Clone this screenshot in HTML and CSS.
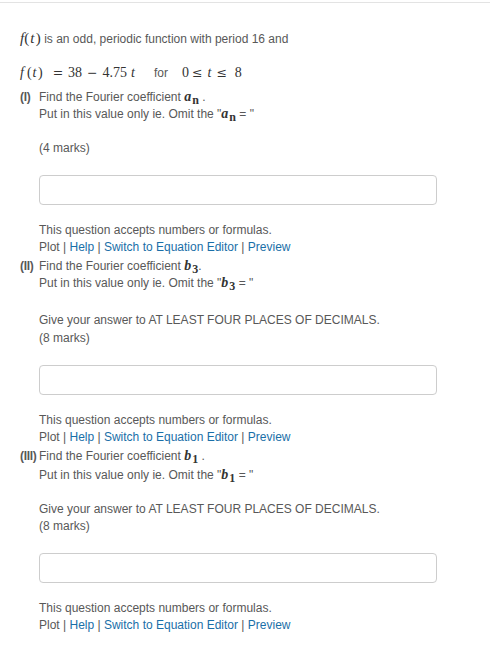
FILE: index.html
```html
<!DOCTYPE html>
<html>
<head>
<meta charset="utf-8">
<link rel="stylesheet" href="styles.css">
</head>
<body>
<div class="topline"></div>
<div class="page">
  <p class="intro"><span class="m"><i>f</i>(<i class="pt">t</i>)</span> is an odd, periodic function with period 16 and</p>
  <p class="equation">
    <span class="m tk"><i>f</i></span><span class="m tk par">(<i class="pt">t</i>)</span><span class="m tk rel eqs">=</span><span class="m tk n38">38</span><span class="m tk rel minus">−</span><span class="m tk n475">4.75</span><span class="m tk tt"><i>t</i></span><span class="tk for">for</span><span class="m tk zero">0</span><span class="m tk rel le1">≤</span><span class="m tk t2"><i>t</i></span><span class="m tk rel le2">≤</span><span class="m tk eight">8</span>
  </p>

  <div class="q">
    <div class="lbl">(I)</div>
    <div class="body">
      <div class="line">Find the Fourier coefficient <span class="c"><i>a</i><sub>n</sub></span> .</div>
      <div class="line">Put in this value only ie. Omit the "<span class="c"><i>a</i><sub>n</sub></span> = "</div>
      <div class="gap"></div>
      <div class="line">(4 marks)</div>
      <div class="answer"></div>
      <div class="line">This question accepts numbers or formulas.</div>
      <div class="line">Plot | <a>Help</a> | <a>Switch to Equation Editor</a> | <a>Preview</a></div>
    </div>
  </div>

  <div class="q">
    <div class="lbl">(II)</div>
    <div class="body">
      <div class="line">Find the Fourier coefficient <span class="c"><i>b</i><sub>3</sub></span>.</div>
      <div class="line">Put in this value only ie. Omit the "<span class="c"><i>b</i><sub>3</sub></span> = "</div>
      <div class="gap wide"></div>
      <div class="line">Give your answer to AT LEAST FOUR PLACES OF DECIMALS.</div>
      <div class="line">(8 marks)</div>
      <div class="answer"></div>
      <div class="line">This question accepts numbers or formulas.</div>
      <div class="line">Plot | <a>Help</a> | <a>Switch to Equation Editor</a> | <a>Preview</a></div>
    </div>
  </div>

  <div class="q">
    <div class="lbl">(III)</div>
    <div class="body">
      <div class="line">Find the Fourier coefficient <span class="c"><i>b</i><sub>1</sub></span> .</div>
      <div class="line tall">Put in this value only ie. Omit the "<span class="c"><i>b</i><sub>1</sub></span> = "</div>
      <div class="gap"></div>
      <div class="line">Give your answer to AT LEAST FOUR PLACES OF DECIMALS.</div>
      <div class="line">(8 marks)</div>
      <div class="answer"></div>
      <div class="line">This question accepts numbers or formulas.</div>
      <div class="line">Plot | <a>Help</a> | <a>Switch to Equation Editor</a> | <a>Preview</a></div>
    </div>
  </div>
</div>
</body>
</html>
```

FILE: styles.css
```css
html, body {
  margin: 0;
  padding: 0;
  background: #fff;
}
body {
  font-family: "Liberation Sans", Arial, sans-serif;
  font-size: 12px;
  line-height: 17px;
  color: #585858;
}
.topline {
  margin-top: 2px;
  border-top: 1px solid #e3e3e3;
}
.page {
  padding: 0 20px;
}
p {
  margin: 0;
}
.intro {
  margin-top: 27px;
}
.m {
  font-family: "Liberation Serif", "Times New Roman", serif;
  font-size: 15px;
  color: #333;
}
.m i {
  font-style: italic;
}
.pt {
  margin: 0 1.5px 0 1px;
}
.equation {
  margin-top: 16px;
  display: flex;
  align-items: baseline;
  height: 17px;
}
.tk {
  white-space: nowrap;
}
.equation .m {
  font-size: 14px;
}
.rel {
  font-family: "DejaVu Serif", serif;
  font-size: 12.5px;
}
.equation .rel {
  font-size: 12.5px;
}
.par { margin-left: 3px; }
.eqs { margin-left: 10px; }
.n38 { margin-left: 5px; }
.minus { margin-left: 5px; }
.n475 { margin-left: 5px; }
.tt { margin-left: 4px; }
.for { margin-left: 19px; }
.zero { margin-left: 14px; }
.le1 { margin-left: 3px; }
.t2 { margin-left: 5px; }
.le2 { margin-left: 5px; }
.eight { margin-left: 8px; }
.q {
  display: grid;
  grid-template-columns: 19px 398px;
  margin-top: 8px;
}
.q + .q {
  margin-top: 2px;
}
.lbl {
  font-weight: bold;
  letter-spacing: -0.3px;
}
.line {
  height: 17px;
  white-space: nowrap;
}
.line.tall {
  margin-top: 2px;
}
.gap {
  height: 17px;
}
.gap.wide {
  height: 20px;
}
.gap.wide + .line {
  margin-bottom: 1px;
}
.c {
  font-family: "Liberation Serif", "Times New Roman", serif;
  font-weight: bold;
  font-size: 14px;
  color: #333;
  line-height: 0;
}
.c sub {
  font-size: 12px;
  vertical-align: -3px;
  font-style: normal;
  margin-left: 1px;
}
.answer {
  margin: 18px 0 17px;
  height: 28px;
  border: 1px solid #cdcdcd;
  border-radius: 4px;
  background: #fff;
}
a {
  color: #1a6fa8;
}
```
